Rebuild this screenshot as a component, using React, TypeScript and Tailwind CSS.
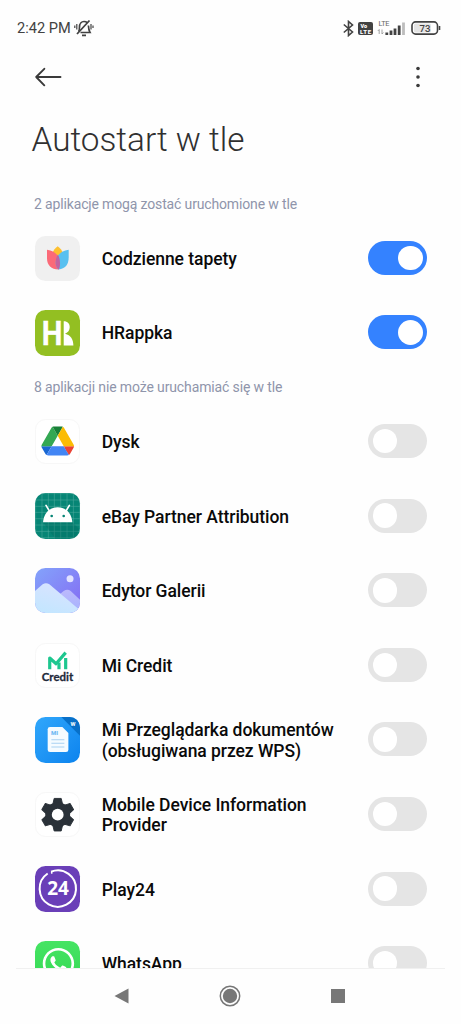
import { useState, type ReactNode } from 'react';
import clsx from 'clsx';
import { FaWhatsapp } from 'react-icons/fa';

type AppEntry = {
  name: ReactNode;
  icon: ReactNode;
  enabled: boolean;
};

function Tile({ className, children }: { className?: string; children: ReactNode }) {
  return (
    <div className={clsx('size-[45.4px] shrink-0 overflow-hidden rounded-[10.5px]', className)}>
      <svg viewBox="0 0 136 136" className="size-full">
        {children}
      </svg>
    </div>
  );
}

function WallpaperIcon() {
  return (
    <Tile className="bg-[#f0f0f0]">
      <path d="M68 31C61 36 53 44 52 55L68 74L84 55C83 44 75 36 68 31Z" fill="#fdc02f" />
      <path d="M36 41C58 44 75 58 75 82C75 90 74 96 71 100C48 100 35 86 36 64Z" fill="#fb6a78" />
      <path d="M101 41C79 44 62 58 62 80C62 90 65 96 71 100C90 99 101 86 101 64Z" fill="#58c0f0" />
      <path d="M68.5 56C73 63 75 72 75 82C75 90 74 96 71 100C65 96 62 90 62 80C62 70 64 62 68.5 56Z" fill="#c263a0" />
    </Tile>
  );
}

function HRappkaIcon() {
  return (
    <Tile className="bg-[#93bf22]">
      <text x="20" y="105" fill="#fff" stroke="#fff" strokeWidth="1" fontFamily="Roboto" fontWeight="700" fontSize="98" textLength="62" lengthAdjust="spacingAndGlyphs">
        H
      </text>
      <path d="M86 34C98 34 104 41 104 52C104 61 99 68 90 71C107 75 115 88 115 106H86Z" fill="#fff" />
    </Tile>
  );
}

function DriveIcon() {
  return (
    <Tile className="border border-[#f7f7f7] bg-white">
      <g transform="translate(17 20) scale(1.17)">
        <path d="m6.6 66.85 3.85 6.65c.8 1.4 1.95 2.5 3.3 3.3l13.75-23.8h-27.5c0 1.55.4 3.1 1.2 4.5z" fill="#1967d2" />
        <path d="m43.65 25-13.75-23.8c-1.35.8-2.5 1.9-3.3 3.3l-25.4 44a9.06 9.06 0 0 0-1.2 4.5h27.5z" fill="#34a853" />
        <path d="m73.55 76.8c1.35-.8 2.5-1.9 3.3-3.3l1.6-2.75 7.65-13.25c.8-1.4 1.2-2.95 1.2-4.5h-27.5l5.85 11.5z" fill="#ea4335" />
        <path d="m43.65 25 13.75-23.8c-1.35-.8-2.9-1.2-4.5-1.2h-18.5c-1.6 0-3.15.45-4.5 1.2z" fill="#188038" />
        <path d="m59.8 53h-32.3l-13.75 23.8c1.35.8 2.9 1.2 4.5 1.2h50.8c1.6 0 3.15-.45 4.5-1.2z" fill="#4285f4" />
        <path d="m73.4 26.5-12.7-22c-.8-1.4-1.95-2.5-3.3-3.3l-13.75 23.8 16.15 28h27.45c0-1.55-.4-3.1-1.2-4.5z" fill="#fbbc04" />
      </g>
    </Tile>
  );
}

function AndroidIcon() {
  const lines = [2, 21, 40, 58, 77, 96, 115, 134];
  return (
    <Tile className="bg-[#068575]">
      {lines.map((n) => (
        <path key={n} d={`M${n} 0V136M0 ${n}H136`} stroke="#4fab9f" strokeWidth="1.6" />
      ))}
      <path d="M24 88H112L132 108L120 136H60Z" fill="#046b5e" opacity="0.35" />
      <path d="M24 88C26 60 44 43 68 43S110 60 112 88Z" fill="#fff" />
      <path d="M42 52L33 37M94 52L103 37" stroke="#fff" strokeWidth="5" strokeLinecap="round" />
      <circle cx="50" cy="69" r="4" fill="#068575" />
      <circle cx="86" cy="69" r="4" fill="#068575" />
    </Tile>
  );
}

function GalleryIcon() {
  return (
    <Tile className="bg-linear-to-br from-[#83a3fb] to-[#8368f2]">
      <defs>
        <linearGradient id="peakBack" x1="0.3" y1="0" x2="0.5" y2="1">
          <stop stopColor="#bdb9fc" />
          <stop offset="1" stopColor="#a6b3fd" />
        </linearGradient>
        <linearGradient id="peakFront" x1="0.7" y1="0" x2="0.3" y2="1">
          <stop stopColor="#dae3ff" />
          <stop offset="1" stopColor="#c3e6ff" />
        </linearGradient>
      </defs>
      <path d="M50 98L86 69Q97 61 107 69L136 96V136H50Z" fill="url(#peakBack)" />
      <path d="M0 69L23 49Q33 42 43 49L134 126V136H0Z" fill="url(#peakFront)" />
      <circle cx="105" cy="32" r="10.5" fill="#e2e2ff" />
    </Tile>
  );
}

function MiCreditIcon() {
  return (
    <Tile className="border border-[#f7f7f7] bg-white">
      <path d="M43 79V44L63 62L93 27" fill="none" stroke="#1dc78f" strokeWidth="10" strokeLinejoin="round" />
      <path d="M72 79V58M93 79V44" stroke="#1dc78f" strokeWidth="10" />
      <text x="18" y="115" fill="#22293a" stroke="#22293a" strokeWidth="0.8" fontFamily="Lato" fontWeight="700" fontSize="34" textLength="99" lengthAdjust="spacingAndGlyphs">
        Credit
      </text>
    </Tile>
  );
}

function DocumentsIcon() {
  return (
    <Tile className="bg-linear-to-br from-[#30a7fb] to-[#0a83ee]">
      <path d="M79 0H136V57Z" fill="#0870c8" />
      <text x="106" y="27" fill="#fff" fontFamily="Roboto" fontWeight="700" fontSize="17">
        W
      </text>
      <path d="M45 30H82L100 48V98Q100 105 93 105H45Q38 105 38 98V37Q38 30 45 30Z" fill="#f5fbff" />
      <text x="48" y="55" fill="#73baf3" fontFamily="Roboto" fontWeight="900" fontSize="18">
        MI
      </text>
      <path d="M49 68H88M49 79H88M49 90H88" stroke="#a8d1f2" strokeWidth="3" />
    </Tile>
  );
}

function GearIcon() {
  return (
    <Tile className="border border-[#f7f7f7] bg-white">
      <g fill="#2a3138">
        {[0, 60, 120, 180, 240, 300].map((deg) => (
          <path key={deg} d="M53 34L57 17H79L83 34Z" stroke="#2a3138" strokeWidth="3" strokeLinejoin="round" transform={`rotate(${deg} 68 68)`} />
        ))}
        <circle cx="68" cy="68" r="39" />
      </g>
      <circle cx="68" cy="68" r="18.5" fill="#fff" />
    </Tile>
  );
}

function Play24Icon() {
  return (
    <Tile className="bg-[#6a3fb8]">
      <path d="M48 17.2A54.5 54.5 0 1 1 38 22.5" fill="none" stroke="#fff" strokeWidth="6" />
      <path d="M49 17L51 23" stroke="#fff" strokeWidth="4" />
      <text x="69" y="88" textAnchor="middle" fill="#fff" fontFamily="Open Sans" fontWeight="700" fontSize="57" textLength="65" lengthAdjust="spacingAndGlyphs">
        24
      </text>
    </Tile>
  );
}

function WhatsAppIcon() {
  return (
    <Tile className="bg-linear-to-b from-[#45e463] to-[#35d853]">
      <FaWhatsapp x="16" y="14" size={108} color="#fff" />
    </Tile>
  );
}

const allowedApps: AppEntry[] = [
  { name: 'Codzienne tapety', icon: <WallpaperIcon />, enabled: true },
  { name: 'HRappka', icon: <HRappkaIcon />, enabled: true },
];

const blockedApps: AppEntry[] = [
  { name: 'Dysk', icon: <DriveIcon />, enabled: false },
  { name: 'eBay Partner Attribution', icon: <AndroidIcon />, enabled: false },
  { name: 'Edytor Galerii', icon: <GalleryIcon />, enabled: false },
  { name: 'Mi Credit', icon: <MiCreditIcon />, enabled: false },
  { name: <>Mi Przeglądarka dokumentów<br />(obsługiwana przez WPS)</>, icon: <DocumentsIcon />, enabled: false },
  { name: <>Mobile Device Information<br />Provider</>, icon: <GearIcon />, enabled: false },
  { name: 'Play24', icon: <Play24Icon />, enabled: false },
  { name: 'WhatsApp', icon: <WhatsAppIcon />, enabled: false },
];

function AppRow({ app }: { app: AppEntry }) {
  const [on, setOn] = useState(app.enabled);

  return (
    <div className="flex h-[74.6px] shrink-0 items-center pr-[34px] pl-[35px]">
      {app.icon}
      <div className="ml-[21.3px] flex-1 pt-[1.6px] text-[17.5px] leading-[20.5px] font-medium tracking-[-0.05px] whitespace-nowrap text-[#0a0a0a]">
        {app.name}
      </div>
      <button
        type="button"
        role="switch"
        aria-checked={on}
        onClick={() => setOn(!on)}
        className={clsx(
          'mb-[0.8px] flex h-[34px] w-[59px] items-center rounded-full px-[4.5px]',
          on ? 'justify-end bg-[#3482ff]' : 'justify-start bg-[#e5e5e5]',
        )}
      >
        <span className="size-[24.5px] rounded-full bg-white" />
      </button>
    </div>
  );
}

function StatusBar() {
  return (
    <div className="flex h-14 shrink-0 items-center justify-between pr-5 pl-[17px] text-[#424242]">
      <div className="flex items-center">
        <span className="text-[14.6px] leading-none">2:42 PM</span>
        <svg viewBox="0 0 20 18" className="ml-[3px] h-[18px] w-5" fill="none" stroke="currentColor" strokeWidth="1.7">
          <path d="M4.5 12.5C5.5 11.5 5.5 10 5.5 8C5.5 4.5 7.5 2.5 10 2.5C11.5 2.5 12.5 3 13.2 3.7M14.4 6.5C14.6 10 14.8 11.5 16 13.5H6.5" />
          <path d="M8 16.3H12M3 15L15.5 1.5" strokeWidth="1.8" />
          <path d="M.8 6.5V9M2.8 5V10.5M17 5V10.5M19 6.5V9" strokeWidth="1.2" />
        </svg>
      </div>
      <div className="flex items-center">
        <svg viewBox="0 0 11 17" className="h-[17px] w-[11px]" fill="none" stroke="currentColor" strokeWidth="1.6">
          <path d="M.8 4.5L9.5 12L5.5 15.5V1.5L9.5 5L.8 12.5" />
        </svg>
        <svg viewBox="0 0 15 13" className="ml-1 h-[13px] w-[15px]" fontFamily="Roboto" fontWeight="900">
          <rect width="15" height="13" rx="2" fill="currentColor" />
          <text x="2.5" y="6" fill="#fff" fontSize="5.5">Vo</text>
          <text x="2" y="11.5" fill="#fff" fontSize="6" textLength="11">LTE</text>
        </svg>
        <svg viewBox="0 0 28 17" className="ml-1 h-[17px] w-7">
          <text x="1.5" y="6.2" fill="#666" fontFamily="Roboto" fontSize="7.4" textLength="11">LTE</text>
          <path d="M2.2 14V9.5L.8 11M5 9.5V14L6.4 12.5" fill="none" stroke="#999" strokeWidth="0.9" />
          <path d="M9.8 15V12.5M14 15V10.5M18 15V8.5M22.2 15V5.5" stroke="#424242" strokeWidth="2.8" />
          <path d="M26.5 15V2.5" stroke="#bdbdbd" strokeWidth="2.8" />
        </svg>
        <svg viewBox="0 0 30 14" className="ml-[6px] h-[14px] w-[30px]">
          <rect x="3" y="2.5" width="17" height="9" rx="1.5" fill="#e4e4e4" />
          <rect x="1" y="0.9" width="25.5" height="12.2" rx="3.6" fill="none" stroke="#424242" strokeWidth="1.6" />
          <path d="M28.5 5V9" stroke="#424242" strokeWidth="1.6" />
          <text x="14" y="10.5" textAnchor="middle" fill="#424242" fontFamily="Roboto" fontWeight="500" fontSize="9.6">73</text>
        </svg>
      </div>
    </div>
  );
}

export default function App() {
  return (
    <div className="flex h-[1024px] w-[461px] flex-col overflow-hidden bg-[#fefefe] font-[Roboto,sans-serif]">
      <StatusBar />

      <header className="flex h-[42px] shrink-0 items-center justify-between pr-[41px] pl-[35px] text-[#3a3a3a]">
        <svg viewBox="0 0 27 20" className="h-5 w-[27px]" fill="none" stroke="currentColor" strokeWidth="1.9" strokeLinecap="round" strokeLinejoin="round">
          <path d="M9.3 1.8L1.2 10L9.3 18.3M1.2 10H25.5" />
        </svg>
        <svg viewBox="0 0 4 22" className="h-[22px] w-1" fill="currentColor">
          <circle cx="2" cy="2.5" r="1.8" />
          <circle cx="2" cy="11" r="1.8" />
          <circle cx="2" cy="19.5" r="1.8" />
        </svg>
      </header>

      <h1 className="flex h-[82px] shrink-0 items-center pt-px pl-[31.5px] text-[33.3px] leading-none font-light text-[#303030]">
        Autostart w tle
      </h1>

      <main className="flex h-[788px] shrink-0 flex-col overflow-hidden">
        <h2 className="flex h-[41px] shrink-0 items-center pt-[7px] pl-[34px] text-[14px] tracking-[-0.15px] text-[#8f95ab]">
          2 aplikacje mogą zostać uruchomione w tle
        </h2>
        {allowedApps.map((app, i) => (
          <AppRow key={i} app={app} />
        ))}
        <h2 className="flex h-[34px] shrink-0 items-center pl-[34px] text-[14px] tracking-[-0.13px] text-[#8f95ab]">
          8 aplikacji nie może uruchamiać się w tle
        </h2>
        {blockedApps.map((app, i) => (
          <AppRow key={i} app={app} />
        ))}
      </main>

      <nav className="mx-4 flex h-14 shrink-0 items-center justify-between border-t border-[#f0f0f0] pr-[100px] pb-px pl-[98px] text-[#777]">
        <svg viewBox="0 0 15 16" className="h-4 w-[15px]" fill="currentColor">
          <path d="M0.5 8L14.5 0.5V15.5Z" />
        </svg>
        <svg viewBox="0 0 22 22" className="size-[22px]">
          <circle cx="11" cy="11" r="9.7" fill="none" stroke="currentColor" strokeWidth="1.5" />
          <circle cx="11" cy="11" r="7.2" fill="currentColor" />
        </svg>
        <div className="size-[14px] bg-[#777]" />
      </nav>
    </div>
  );
}
